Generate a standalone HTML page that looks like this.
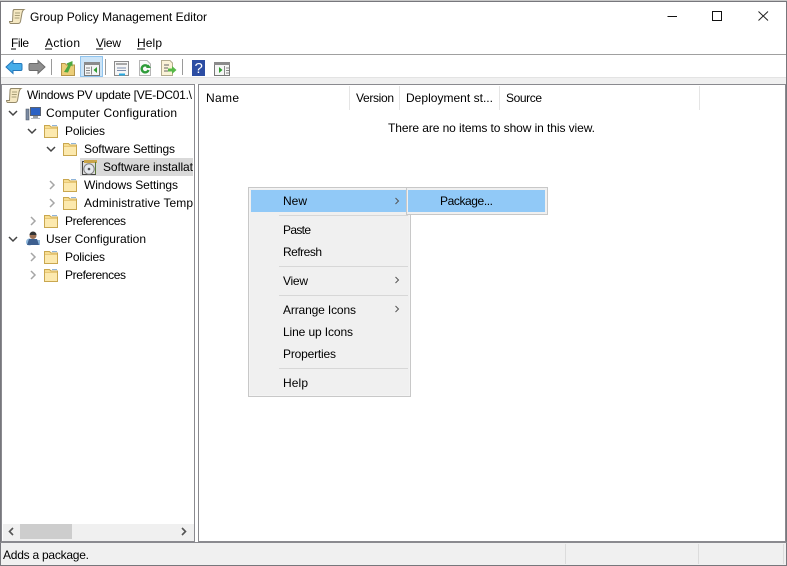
<!DOCTYPE html>
<html lang="en"><head><meta charset="utf-8"><title>Group Policy Management Editor</title>
<style>
html,body{margin:0;padding:0;background:#fff;width:787px;height:566px;overflow:hidden}
svg{display:block}
text{font-family:"Liberation Sans",sans-serif;font-size:12px;fill:#000}
</style></head><body>
<svg width="787" height="566" viewBox="0 0 787 566" xmlns="http://www.w3.org/2000/svg">
<defs>
<g id="folder">
<path d="M.5 13.500V1.500H5.500L7 3H13.500V13.500Z" fill="#f7dd90" stroke="#c9a74f"/>
<rect x="1" y="5" width="12" height="8" fill="#fce9ae"/>
<path d="M8 1.500H13" stroke="#8fb4d8" fill="none"/>
<path d="M1 4.500H13" stroke="#e9c877" fill="none"/>
</g>
<path id="open" d="M-4-2 0 2 4-2" fill="none" stroke="#444" stroke-width="1.500"/>
<path id="closed" d="M-2-4 2 0-2 4" fill="none" stroke="#a6a6a6" stroke-width="1.500"/>
<path id="sub" d="M-1.500-3 1.500 0-1.500 3" fill="none" stroke="#555"/>
<g id="scroll">
<path d="M5 .5H15Q13.500 1.500 13 4L11.500 12.500Q11 14.500 9 14.500H1.500Q.5 14 .5 12.500L3.500 12.500 4 3Q4 1 5 .5Z" fill="#f5e8c2" stroke="#94896a"/>
<path d="M6 4H11M5.800 6.500H10.800M5.600 9H10.400" stroke="#a89e78"/>
</g>
</defs>

<!-- window frame -->
<rect x="0" y="0" width="787" height="566" fill="#fff"/>
<path d="M.5 566V1.500H786.500V566" fill="none" stroke="#77777c"/>
<path d="M0 .5H787" stroke="#c8c8c8"/>

<!-- title -->
<use href="#scroll" x="9" y="9"/>
<text x="30" y="21" textLength="177">Group Policy Management Editor</text>
<path d="M667.500 16.500H677" stroke="#111" fill="none"/>
<rect x="712.500" y="11.500" width="9" height="9" fill="none" stroke="#111"/>
<path d="M758.500 11.500 768 20.500M768 11.500 758.500 20.500" stroke="#222" fill="none"/>

<!-- menu -->
<text x="11" y="47" textLength="18">File</text>
<path d="M11 49H16" stroke="#000"/>
<text x="45" y="47" textLength="35">Action</text>
<path d="M45 49H52" stroke="#000"/>
<text x="96" y="47" textLength="25">View</text>
<path d="M96 49H103" stroke="#000"/>
<text x="137" y="47" textLength="25">Help</text>
<path d="M137 49H145" stroke="#000"/>
<path d="M1 54.500H786" stroke="#a0a0a0"/>

<!-- toolbar -->
<path d="M6 67 13 60.500V63.500H21Q22 63.500 22 65V69Q22 70.500 21 70.500H13V73.500Z" fill="#46ade9" stroke="#2478bb"/>
<path d="M45 67 38 60.500V63.500H30Q29 63.500 29 65V69Q29 70.500 30 70.500H38V73.500Z" fill="#8f8f8f" stroke="#6b6b6b"/>
<path d="M51.500 59V75M105.500 59V75M182.500 59V75" stroke="#9a9a9a"/>
<path d="M61.500 63.500H65L66.500 65H74.500V75.500H61.500Z" fill="#ecce78" stroke="#b6964a"/>
<path d="M64 72 68 65.500 66.500 63.500 72.500 61 72.500 66.500 71 65.500 68 72.500Z" fill="#4ea83f"/>
<rect x="80.500" y="56.500" width="22" height="20" fill="#cce4f7" stroke="#90c4ee"/>
<rect x="84.500" y="62.500" width="15" height="13" fill="#f4f4f4" stroke="#777"/>
<rect x="84" y="62" width="16" height="3" fill="#8b8b8b"/>
<path d="M91.500 66.500V74.500M86 68H90M86 70.500H90M86 73H90" stroke="#888"/>
<path d="M97 67V73L93.500 70Z" fill="#2f9e2f"/>
<rect x="114.500" y="61.500" width="14" height="14" fill="#f6f6f6" stroke="#8a8a8a"/>
<rect x="116" y="63" width="11" height="2" fill="#a8a8a8"/>
<path d="M117 68H126M117 70.500H126" stroke="#7c8dad"/>
<rect x="119" y="73.500" width="6" height="2" fill="#29a9e0"/>
<path d="M139.500 60.500H147L150.500 64V75.500H139.500Z" fill="#fafafa" stroke="#b5b5b5"/>
<path d="M147.800 66.500A3.500 3.500 0 1 0 148.500 70" fill="none" stroke="#2f9c3a" stroke-width="2.400"/>
<path d="M146 68H151L148.500 64.500Z" fill="#2f9c3a"/>
<path d="M161.500 60.500H170L172.500 63V75.500H161.500Z" fill="#fbf3d7" stroke="#b3ac8f"/>
<path d="M164 65H169M164 68H168M164 71H168" stroke="#666"/>
<path d="M168 68.500H172V66L176.500 70 172 74V71.500H168Z" fill="#57b947"/>
<rect x="192" y="60" width="13" height="16" fill="#2c4da3"/>
<text x="194.500" y="73" style="font-size:15px;fill:#fff">?</text>
<rect x="214.500" y="62.500" width="15" height="13" fill="#f6f6f6" stroke="#777"/>
<rect x="214" y="62" width="16" height="3" fill="#8b8b8b"/>
<path d="M224.500 66V75M226 68H229M226 70.500H229M226 73H229" stroke="#888"/>
<path d="M219 67V73L222.500 70Z" fill="#2f9e2f"/>

<!-- band under toolbar -->
<rect x="1" y="77" width="785" height="7" fill="#f0f0f0"/>
<path d="M1 77.500H786" stroke="#e3e3e3"/>

<!-- left pane -->
<rect x="1.500" y="84.500" width="193" height="457" fill="#fff" stroke="#8a8a8f"/>
<rect x="80" y="158" width="113" height="18" fill="#d9d9d9"/>

<!-- right pane -->
<rect x="198.500" y="84.500" width="587" height="457" fill="#fff" stroke="#8a8a8f"/>
<path d="M349.500 86V110M399.500 86V110M499.500 86V110M699.500 86V110" stroke="#e5e5e5"/>
<text x="206" y="102" textLength="33">Name</text>
<text x="356" y="102" textLength="38">Version</text>
<text x="406" y="102" textLength="87">Deployment st...</text>
<text x="506" y="102" textLength="36">Source</text>
<text x="388" y="132" textLength="207">There are no items to show in this view.</text>

<!-- tree -->
<use href="#scroll" x="6" y="88"/>
<text x="27" y="99" textLength="165">Windows PV update [VE-DC01.\</text>

<use href="#open" x="13" y="113"/>
<rect x="30.500" y="107.500" width="10" height="8" fill="#2c62c4" stroke="#5a6270"/>
<path d="M26 109H29V120H26Z" fill="#7b8ba3" stroke="#4b5563" stroke-width=".6"/>
<path d="M33 116H38V118H33Z" fill="#9aa0a8"/>
<path d="M31 118.500H40" stroke="#b5b9bf"/>
<text x="46" y="117" textLength="131">Computer Configuration</text>

<use href="#open" x="32" y="131"/>
<use href="#folder" x="44" y="124"/>
<text x="65" y="135" textLength="40">Policies</text>

<use href="#open" x="51" y="149"/>
<use href="#folder" x="63" y="142"/>
<text x="84" y="153" textLength="91">Software Settings</text>

<rect x="82.500" y="161.500" width="13" height="13" fill="#dedede" stroke="#444"/>
<rect x="84" y="160" width="13" height="3" fill="#caa54a"/>
<path d="M95.500 162V174" stroke="#5b7a3a"/>
<circle cx="89" cy="169" r="5.200" fill="#e6e9ee" stroke="#7a7a7a"/>
<circle cx="89" cy="169" r="1.300" fill="#555"/>
<text x="103" y="171" textLength="90">Software installat</text>

<use href="#closed" x="52" y="185"/>
<use href="#folder" x="63" y="178"/>
<text x="84" y="189" textLength="94">Windows Settings</text>

<use href="#closed" x="52" y="203"/>
<use href="#folder" x="63" y="196"/>
<text x="84" y="207" textLength="109">Administrative Temp</text>

<use href="#closed" x="33" y="221"/>
<use href="#folder" x="44" y="214"/>
<text x="65" y="225" textLength="61">Preferences</text>

<use href="#open" x="13" y="239"/>
<circle cx="29.500" cy="242" r="3.500" fill="#8fb8dc"/>
<path d="M35 240H40V245H35Z" fill="#8fb8dc"/>
<path d="M29 239H37L39 245H27Z" fill="#3d5f8f"/>
<circle cx="33" cy="235.500" r="3.500" fill="#9c7155"/>
<path d="M29.500 235A3.500 3.500 0 0 1 36.500 235Z" fill="#333"/>
<text x="46" y="243" textLength="100">User Configuration</text>

<use href="#closed" x="33" y="257"/>
<use href="#folder" x="44" y="250"/>
<text x="65" y="261" textLength="40">Policies</text>

<use href="#closed" x="33" y="275"/>
<use href="#folder" x="44" y="268"/>
<text x="65" y="279" textLength="61">Preferences</text>

<!-- scrollbar -->
<rect x="3" y="524" width="191" height="17" fill="#f0f0f0"/>
<rect x="20" y="524" width="52" height="15" fill="#cdcdcd"/>
<path d="M13 528 9.500 531.500 13 535" fill="none" stroke="#555" stroke-width="1.600"/>
<path d="M182 528 185.500 531.500 182 535" fill="none" stroke="#555" stroke-width="1.600"/>

<!-- status bar -->
<rect x="1" y="543" width="785" height="22" fill="#f0f0f0"/>
<path d="M0 542.500H787" stroke="#8a8a8f"/>
<path d="M0 565.500H787" stroke="#77777c"/>
<path d="M565.500 544V564M698.500 544V564M783.500 544V564" stroke="#dcdcdc"/>
<text x="3" y="559" textLength="86">Adds a package.</text>

<!-- context menu -->
<rect x="248.500" y="187.500" width="162" height="209" fill="#f0f0f0" stroke="#c8c8c8"/>
<rect x="249.500" y="188.500" width="160" height="207" fill="none" stroke="#f4f4f4"/>
<rect x="251" y="190" width="155" height="22" fill="#91c9f7"/>
<path d="M279 215.500H408M279 266.500H408M279 295.500H408M279 368.500H408" stroke="#d7d7d7"/>
<text x="283" y="205" textLength="24">New</text>
<text x="283" y="234" textLength="28">Paste</text>
<text x="283" y="256" textLength="39">Refresh</text>
<text x="283" y="285" textLength="25">View</text>
<text x="283" y="314" textLength="73">Arrange Icons</text>
<text x="283" y="336" textLength="70">Line up Icons</text>
<text x="283" y="358" textLength="53">Properties</text>
<text x="283" y="387" textLength="25">Help</text>
<use href="#sub" x="397" y="201"/>
<use href="#sub" x="397" y="280"/>
<use href="#sub" x="397" y="309"/>

<!-- submenu -->
<rect x="406.500" y="187.500" width="141" height="27" fill="#f0f0f0" stroke="#c8c8c8"/>
<rect x="408" y="190" width="137" height="22" fill="#91c9f7"/>
<text x="440" y="205" textLength="53">Package...</text>
</svg>
</body></html>
